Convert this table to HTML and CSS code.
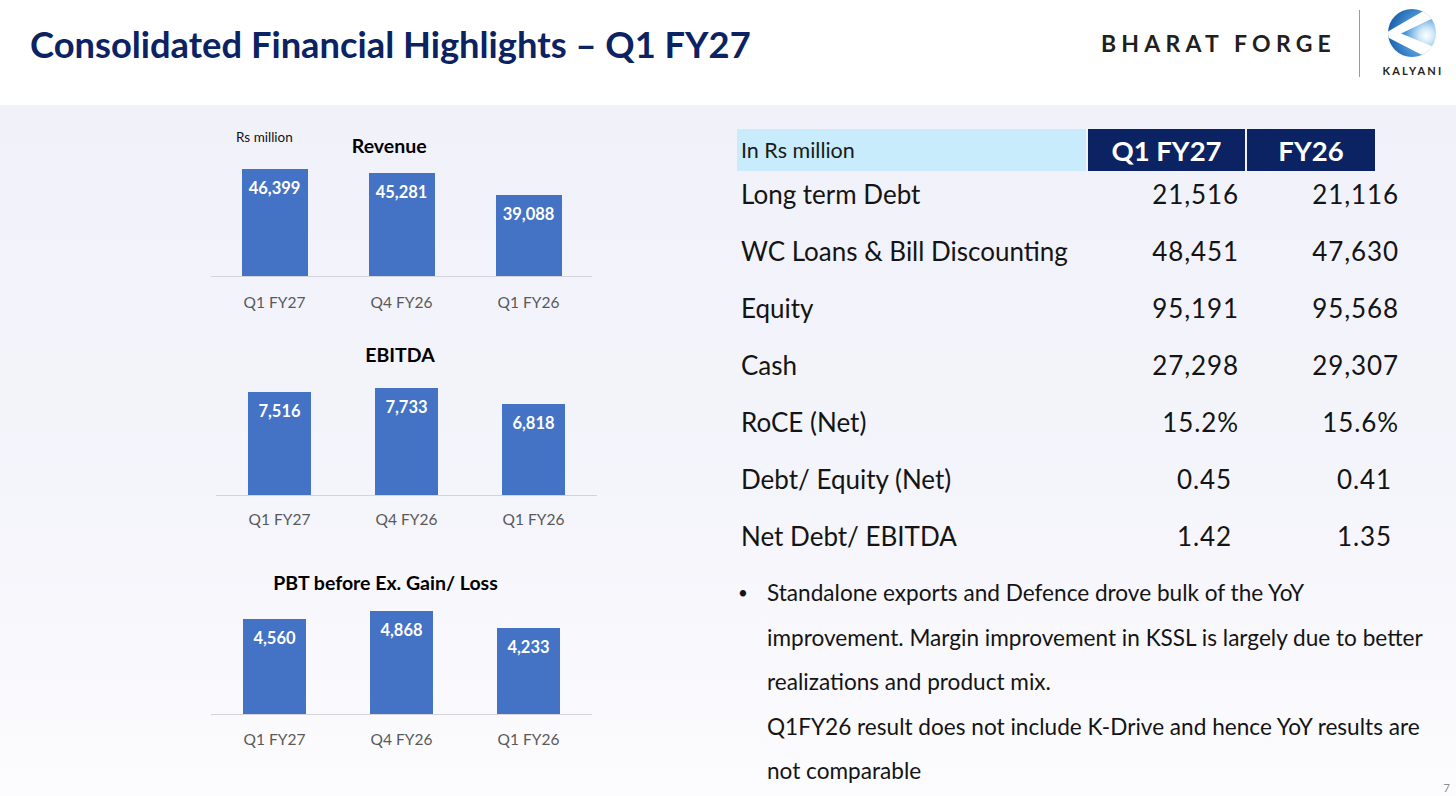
FILE: index.html
```html
<!DOCTYPE html>
<html lang="en">
<head>
<meta charset="utf-8">
<title>Consolidated Financial Highlights – Q1 FY27</title>
<link rel="stylesheet" href="styles.css">
</head>
<body>
<div class="slide">
  <header class="header">
    <h1 class="title">Consolidated Financial Highlights – Q1 FY27</h1>
    <div class="brand">
      <div class="wordmark">BHARAT FORGE</div>
      <div class="brand-sep"></div>
      <div class="kalyani">
        <svg class="kalyani-mark" width="48" height="48" viewBox="0 0 48 48" aria-hidden="true">
          <defs>
            <radialGradient id="kg" cx="0.8" cy="0.55" r="0.85">
              <stop offset="0" stop-color="#ffffff"/>
              <stop offset="0.18" stop-color="#cfe8f8"/>
              <stop offset="0.5" stop-color="#4f9ad8"/>
              <stop offset="1" stop-color="#1357a6"/>
            </radialGradient>
            <clipPath id="kc"><circle cx="24" cy="24" r="24"/></clipPath>
          </defs>
          <g clip-path="url(#kc)">
            <rect width="48" height="48" fill="url(#kg)"/>
            <polygon points="-2,23.6 44,-3 56,4 13,24.5 56,42 44,51 -2,27.6" fill="#ffffff"/>
          </g>
        </svg>
        <div class="kalyani-name">KALYANI</div>
      </div>
    </div>
  </header>

  <main class="content">
    <section class="charts">
      <div class="chart chart-revenue">
        <div class="chart-head">
          <span class="unit">Rs million</span>
          <span class="chart-title">Revenue</span>
        </div>
        <div class="plot">
          <div class="slot"><div class="bar" style="height:107px"><span class="val">46,399</span></div></div>
          <div class="slot"><div class="bar" style="height:103px"><span class="val">45,281</span></div></div>
          <div class="slot"><div class="bar" style="height:81px"><span class="val">39,088</span></div></div>
        </div>
        <div class="axis-labels"><span>Q1 FY27</span><span>Q4 FY26</span><span>Q1 FY26</span></div>
      </div>

      <div class="chart chart-ebitda">
        <div class="chart-head center">
          <span class="chart-title">EBITDA</span>
        </div>
        <div class="plot">
          <div class="slot"><div class="bar" style="height:103px"><span class="val">7,516</span></div></div>
          <div class="slot"><div class="bar" style="height:107px"><span class="val">7,733</span></div></div>
          <div class="slot"><div class="bar" style="height:91px"><span class="val">6,818</span></div></div>
        </div>
        <div class="axis-labels"><span>Q1 FY27</span><span>Q4 FY26</span><span>Q1 FY26</span></div>
      </div>

      <div class="chart chart-pbt">
        <div class="chart-head center">
          <span class="chart-title">PBT before Ex. Gain/ Loss</span>
        </div>
        <div class="plot">
          <div class="slot"><div class="bar" style="height:95px"><span class="val">4,560</span></div></div>
          <div class="slot"><div class="bar" style="height:103px"><span class="val">4,868</span></div></div>
          <div class="slot"><div class="bar" style="height:86px"><span class="val">4,233</span></div></div>
        </div>
        <div class="axis-labels"><span>Q1 FY27</span><span>Q4 FY26</span><span>Q1 FY26</span></div>
      </div>
    </section>

    <section class="details">
      <div class="table">
        <div class="thead">
          <div class="th th-unit">In Rs million</div>
          <div class="th th-period">Q1 FY27</div>
          <div class="th th-period">FY26</div>
        </div>
        <div class="row"><span class="label">Long term Debt</span><span class="num">21,516</span><span class="num">21,116</span></div>
        <div class="row"><span class="label">WC Loans &amp; Bill Discounting</span><span class="num">48,451</span><span class="num">47,630</span></div>
        <div class="row"><span class="label">Equity</span><span class="num">95,191</span><span class="num">95,568</span></div>
        <div class="row"><span class="label">Cash</span><span class="num">27,298</span><span class="num">29,307</span></div>
        <div class="row"><span class="label">RoCE (Net)</span><span class="num">15.2%</span><span class="num">15.6%</span></div>
        <div class="row ratio"><span class="label">Debt/ Equity (Net)</span><span class="num">0.45</span><span class="num">0.41</span></div>
        <div class="row ratio"><span class="label">Net Debt/ EBITDA</span><span class="num">1.42</span><span class="num">1.35</span></div>
      </div>

      <div class="notes">
        <div class="note bullet">
          <span class="dot">•</span>
          <p>Standalone exports and Defence drove bulk of the YoY<br>improvement. Margin improvement in KSSL is largely due to better<br>realizations and product mix.</p>
        </div>
        <div class="note">
          <p>Q1FY26 result does not include K-Drive and hence YoY results are<br>not comparable</p>
        </div>
      </div>
      <div class="page-no">7</div>
    </section>
  </main>
</div>
</body>
</html>
```

FILE: styles.css
```css
* { box-sizing: border-box; }

html, body {
  margin: 0;
  padding: 0;
}

body {
  font-family: "Lato", "Open Sans", "Liberation Sans", sans-serif;
  color: #141414;
  background: #ffffff;
}

.slide {
  width: 1456px;
  height: 796px;
  overflow: hidden;
  display: flex;
  flex-direction: column;
}

/* ---------- header ---------- */
.header {
  height: 105px;
  flex: 0 0 105px;
  background: #ffffff;
  display: flex;
  justify-content: space-between;
  align-items: flex-start;
  padding: 0 13px 0 30px;
}

.title {
  margin: 23px 0 0;
  font-size: 36.3px;
  line-height: 42px;
  font-weight: 700;
  color: #0b2263;
  letter-spacing: 0;
  white-space: nowrap;
}

.brand {
  display: flex;
  align-items: flex-start;
  padding-top: 9px;
}

.wordmark {
  margin-top: 21px;
  font-size: 23px;
  line-height: 26px;
  font-weight: 700;
  letter-spacing: 5.2px;
  color: #231f20;
  white-space: nowrap;
}

.brand-sep {
  width: 1px;
  height: 67px;
  margin-left: 23px;
  margin-top: 1px;
  background: #9a9a9a;
}

.kalyani {
  width: 62px;
  margin-left: 21px;
  display: flex;
  flex-direction: column;
  align-items: center;
}

.kalyani-mark {
  display: block;
}

.kalyani-name {
  margin-top: 8px;
  font-size: 11px;
  line-height: 12px;
  font-weight: 700;
  letter-spacing: 2.2px;
  margin-right: -2px;
  color: #231f20;
}

/* ---------- content ---------- */
.content {
  flex: 1;
  display: flex;
  background: linear-gradient(180deg, #f1f1fa 0%, #f4f4fb 55%, #fcfcfe 100%);
}

.charts {
  width: 737px;
  flex: 0 0 737px;
  display: flex;
  flex-direction: column;
}

.chart {
  width: 381px;
}

.chart-revenue { margin: 23px 0 0 211px; }
.chart-ebitda  { margin: 32px 0 0 216px; }
.chart-pbt     { margin: 43px 0 0 211px; }

.chart-head {
  display: flex;
  align-items: flex-start;
  height: 29px;
}

.chart-head.center {
  height: 22px;
  justify-content: center;
}

.chart-ebitda .chart-head { padding-right: 13px; }
.chart-pbt .chart-head { padding-right: 32px; }

.unit {
  margin-left: 25px;
  font-size: 13.5px;
  line-height: 18px;
  color: #111;
  white-space: nowrap;
}

.chart-title {
  font-size: 19.5px;
  line-height: 22px;
  font-weight: 700;
  color: #000;
  white-space: nowrap;
}

.chart-revenue .chart-title {
  margin-left: 59px;
  margin-top: 7px;
}

.plot {
  display: flex;
  align-items: flex-end;
  border-bottom: 1px solid #d4d4d8;
}

.chart-revenue .plot { height: 120px; }
.chart-ebitda .plot  { height: 130px; }
.chart-pbt .plot     { height: 121px; }

.slot {
  flex: 1;
  display: flex;
  justify-content: center;
}

.bar {
  width: 66px;
  background: #4472c4;
  display: flex;
  justify-content: center;
  padding-top: 9px;
}

.chart-ebitda .bar,
.chart-pbt .bar { width: 63px; }

.val {
  color: #ffffff;
  font-weight: 700;
  font-size: 16.5px;
  line-height: 20px;
}

.axis-labels {
  display: flex;
  margin-top: 15px;
}

.chart-ebitda .axis-labels { margin-top: 13px; }
.chart-pbt .axis-labels { margin-top: 14px; }

.axis-labels span {
  flex: 1;
  text-align: center;
  font-size: 15.5px;
  line-height: 20px;
  color: #595959;
}

/* ---------- details (right) ---------- */
.details {
  flex: 1;
  display: flex;
  flex-direction: column;
  padding-top: 24px;
}

.thead {
  display: grid;
  grid-template-columns: 349px 157px 128px;
  column-gap: 2px;
  height: 42px;
}

.th {
  display: flex;
  align-items: center;
}

.th-unit {
  background: #c8ecfb;
  padding-left: 4px;
  font-size: 21.5px;
  color: #1a1a1a;
}

.th-period {
  background: #0b2263;
  color: #ffffff;
  justify-content: center;
  font-weight: 700;
  font-size: 27.5px;
}

.row {
  display: grid;
  grid-template-columns: 349px 153px 160px;
  height: 46px;
  margin-top: 11px;
  align-items: center;
  font-size: 26px;
  line-height: 46px;
  color: #141414;
}

.thead + .row { margin-top: 0; }

.label {
  padding-left: 4px;
  white-space: nowrap;
}

.num {
  text-align: right;
  white-space: nowrap;
  letter-spacing: 0.9px;
  padding-right: 0;
}

.row.ratio .num { padding-right: 7px; }

.notes {
  margin-top: 12px;
  font-size: 22.6px;
  line-height: 44.5px;
  color: #141414;
}

.note {
  display: flex;
}

.note p {
  margin: 0 0 0 30px;
  white-space: nowrap;
}

.note.bullet p { margin-left: 0; }

.dot {
  width: 30px;
  flex: 0 0 30px;
  font-size: 17px;
  padding-left: 1px;
}

.page-no {
  align-self: flex-end;
  margin: -12px 6px 0 0;
  font-size: 11px;
  line-height: 12px;
  color: #8c8c8c;
}
```
